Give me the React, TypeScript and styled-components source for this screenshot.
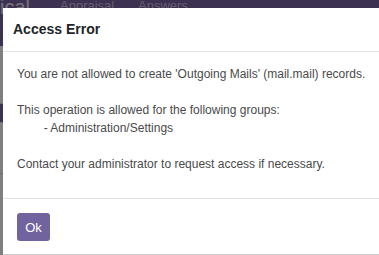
import styled, { createGlobalStyle } from "styled-components";

const GlobalStyle = createGlobalStyle`
html, body {
    margin: 0;
    padding: 0;
    overflow: hidden;
    background: #7f7f7f;
    font-family: 'Liberation Sans', Arial, sans-serif;
}
`

const Page = styled.div`
position: relative;
width: 379px;
height: 255px;
overflow: hidden;
background: #fff;
`

const NavBar = styled.div`
display: flex;
align-items: flex-start;
height: 46px;
background: #7a63a3;
`

const Brand = styled.span`
font-size: 20px;
line-height: 20px;
color: #ece6f5;
margin-top: -3px;
width: 60px;
`

const NavItem = styled.span<{ w: number }>`
width: ${p => p.w}px;
font-size: 13px;
line-height: 16px;
color: #c9bedb;
margin-top: -2px;
`

const SideBlock = styled.div<{ h: number; dark?: boolean }>`
height: ${p => p.h}px;
background: ${p => (p.dark ? '#7a63a3' : '#fff')};
border-bottom: 1px solid #ddd;
`

const Backdrop = styled.div`
position: absolute;
inset: 0;
background: rgba(0, 0, 0, 0.5);
`

const Modal = styled.div`
position: absolute;
left: 3px;
top: 8px;
width: 520px;
background: #fff;
border-bottom: 1px solid rgba(0, 0, 0, 0.2);
display: flex;
flex-direction: column;
`

const Header = styled.div`
padding: 11px 10px 12px;
border-bottom: 1px solid #dee2e6;
`

const Title = styled.h4`
margin: 0;
font-size: 14px;
line-height: 20px;
font-weight: 700;
color: #212529;
`

const Body = styled.div`
padding: 13px 14px 9px;
border-bottom: 1px solid #dee2e6;
`

const Message = styled.p`
margin: 0 0 16px;
white-space: pre-wrap;
tab-size: 8;
font-size: 12px;
line-height: 18px;
color: #4a4a4a;
`

const Footer = styled.div`
display: flex;
padding: 14px 14px 13px;
`

const OkButton = styled.button`
width: 33px;
height: 28px;
padding: 0;
border: none;
border-radius: 3px;
background: #71639e;
color: #fff;
font-family: 'Liberation Sans', Arial, sans-serif;
font-size: 13px;
`

const message = "You are not allowed to create 'Outgoing Mails' (mail.mail) records.\n\nThis operation is allowed for the following groups:\n\t- Administration/Settings\n\nContact your administrator to request access if necessary."

export default function App() {
    return (
        <Page>
            <GlobalStyle />
            <NavBar>
                <Brand>ical</Brand>
                <NavItem w={78}>Appraisal</NavItem>
                <NavItem w={60}>Answers</NavItem>
            </NavBar>
            <SideBlock h={57} />
            <SideBlock h={18} dark />
            <SideBlock h={50} />
            <Backdrop />
            <Modal>
                <Header>
                    <Title>Access Error</Title>
                </Header>
                <Body>
                    <Message>{message}</Message>
                </Body>
                <Footer>
                    <OkButton>Ok</OkButton>
                </Footer>
            </Modal>
        </Page>
    );
}
